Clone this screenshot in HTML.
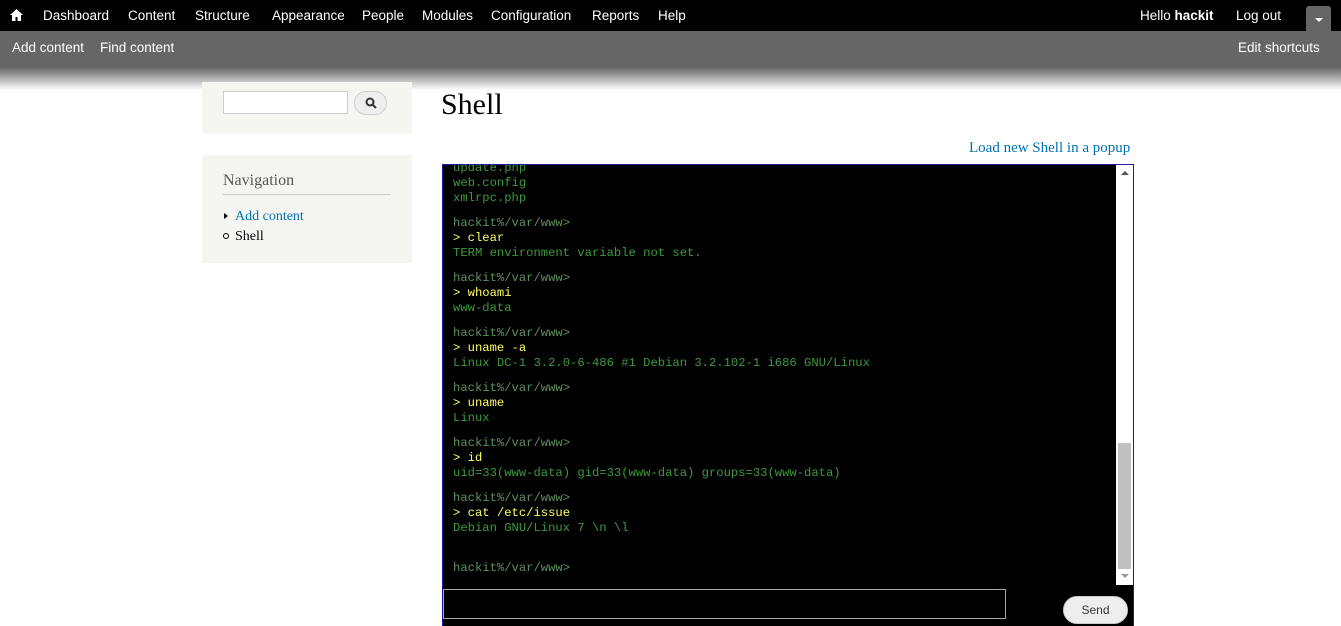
<!DOCTYPE html>
<html><head><meta charset="utf-8"><style>
*{margin:0;padding:0;box-sizing:border-box}
html,body{width:1341px;height:626px;overflow:hidden}
body{background:#fff;font-family:"Liberation Sans",sans-serif;position:relative}
.tb{position:absolute;left:0;top:0;width:1341px;height:31px;background:#000;color:#fff;font-size:13.5px}
.tb span{position:absolute;top:8px}
.sc{position:absolute;left:0;top:31px;width:1341px;height:37px;background:#666;color:#fff;font-size:13.5px}
.sc span{position:absolute;top:9px}
.sh{position:absolute;left:0;top:68px;width:1341px;height:22px;background:linear-gradient(#6a6a6a,#fff)}
.blk{position:absolute;background:#f5f5f2}
.serif{font-family:"Liberation Serif",serif}
.term{position:absolute;left:442px;top:164px;width:692px;height:470px;background:#000;border:1px solid #1a1a9a;overflow:hidden}
.out{position:absolute;left:10px;top:-4px;font-family:"Liberation Mono",monospace;font-size:12.2px;line-height:15px;color:#3c9a3c;white-space:pre}
.p{color:#5f8f5f}.y{color:#ffff60}
.g{height:10px}
</style></head><body>
<div class="tb">
<svg style="position:absolute;left:10px;top:9px" width="13" height="12" viewBox="0 0 13 12"><path d="M6.5 0L0 6h2v6h3.5V8h2v4H11V6h2z" fill="#fff"/></svg>
<span style="left:43px">Dashboard</span><span style="left:128px">Content</span><span style="left:195px">Structure</span><span style="left:272px">Appearance</span><span style="left:362px">People</span><span style="left:422px">Modules</span><span style="left:491px">Configuration</span><span style="left:592px">Reports</span><span style="left:658px">Help</span>
<span style="left:1140px">Hello <b>hackit</b></span><span style="left:1236px">Log out</span>
<div style="position:absolute;left:1306px;top:6px;width:25px;height:25px;background:#666;border-radius:3px 3px 0 0"><div style="position:absolute;left:9px;top:12px;border:4px solid transparent;border-top:4px solid #fff;border-bottom:0"></div></div>
</div>
<div class="sc"><span style="left:12px">Add content</span><span style="left:100px">Find content</span><span style="left:1238px">Edit shortcuts</span></div>
<div class="sh"></div>
<div class="blk" style="left:202px;top:82px;width:210px;height:52px">
<div style="position:absolute;left:21px;top:9px;width:125px;height:23px;background:#fff;border:1px solid #ccc"></div>
<div style="position:absolute;left:152px;top:9px;width:33px;height:24px;background:#eee;border:1px solid #ccc;border-radius:12px"><svg style="position:absolute;left:10px;top:5px" width="12" height="12" viewBox="0 0 12 12"><circle cx="5" cy="5" r="3.5" stroke="#333" stroke-width="2" fill="none"/><path d="M7.5 7.5L11 11" stroke="#333" stroke-width="2"/></svg></div>
</div>
<div class="blk serif" style="left:202px;top:155px;width:210px;height:108px">
<div style="position:absolute;left:21px;top:17px;font-size:16px;color:#555">Navigation</div>
<div style="position:absolute;left:21px;top:39px;width:168px;border-top:1px solid #ccc"></div>
<div style="position:absolute;left:22px;top:58px;border:3.5px solid transparent;border-left:4px solid #000;border-right:0"></div>
<div style="position:absolute;left:33px;top:54px;font-size:14px;color:#0071b3">Add content</div>
<div style="position:absolute;left:21px;top:78px;width:6px;height:6px;border:1px solid #000;border-radius:50%"></div>
<div style="position:absolute;left:33px;top:74px;font-size:14px">Shell</div>
</div>
<div class="serif" style="position:absolute;left:441px;top:88px;font-size:30px">Shell</div>
<div class="serif" style="position:absolute;left:969px;top:140px;font-size:15px;color:#0071b3">Load new Shell in a popup</div>
<div class="term">
<div class="out">update.php
web.config
xmlrpc.php
<div class="g"></div><span class="p">hackit%/var/www&gt;</span>
<span class="y">&gt; clear</span>
TERM environment variable not set.
<div class="g"></div><span class="p">hackit%/var/www&gt;</span>
<span class="y">&gt; whoami</span>
www-data
<div class="g"></div><span class="p">hackit%/var/www&gt;</span>
<span class="y">&gt; uname -a</span>
Linux DC-1 3.2.0-6-486 #1 Debian 3.2.102-1 i686 GNU/Linux
<div class="g"></div><span class="p">hackit%/var/www&gt;</span>
<span class="y">&gt; uname</span>
Linux
<div class="g"></div><span class="p">hackit%/var/www&gt;</span>
<span class="y">&gt; id</span>
uid=33(www-data) gid=33(www-data) groups=33(www-data)
<div class="g"></div><span class="p">hackit%/var/www&gt;</span>
<span class="y">&gt; cat /etc/issue</span>
Debian GNU/Linux 7 \n \l

<div style="height:10px"></div><span class="p">hackit%/var/www&gt;</span></div>
<div style="position:absolute;left:673px;top:0;width:17px;height:420px;background:#fff">
<div style="position:absolute;left:5px;top:6px;border:4px solid transparent;border-bottom:4px solid #555;border-top:0"></div>
<div style="position:absolute;left:2px;top:278px;width:13px;height:126px;background:#c0c0c0"></div>
<div style="position:absolute;left:5px;top:409px;border:4px solid transparent;border-top:4px solid #999;border-bottom:0"></div>
</div>
<div style="position:absolute;left:0;top:424px;width:563px;height:30px;border:1px solid #9ab0a0;background:#000"></div>
<div style="position:absolute;left:620px;top:431px;width:65px;height:28px;background:#eee;border:1px solid #ccc;border-radius:14px;font-size:12px;color:#333;text-align:center;line-height:26px">Send</div>
</div>
</body></html>
